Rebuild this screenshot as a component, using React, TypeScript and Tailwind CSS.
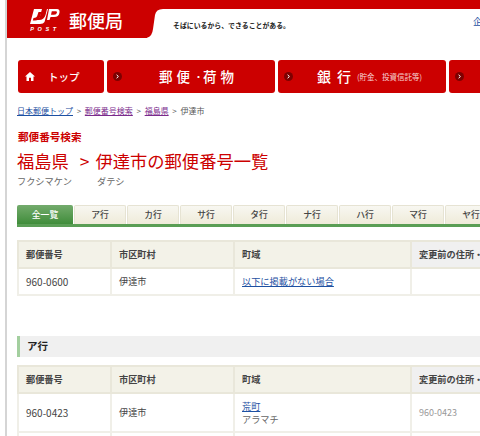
import React from 'react';

const FONT = "font-['Noto_Sans_CJK_JP','Noto_Sans',sans-serif]";

const tabs = ['ア行', 'カ行', 'サ行', 'タ行', 'ナ行', 'ハ行', 'マ行', 'ヤ行', 'ラ行'];

const Chevron = () => (
    <span className="w-[9px] h-[9px] rounded-full bg-[#7d0000] flex items-center justify-center shrink-0">
        <svg width="5" height="5" viewBox="0 0 5 5">
            <path d="M1.6 0.8 L3.4 2.5 L1.6 4.2" fill="none" stroke="#fff" strokeWidth="1" />
        </svg>
    </span>
);

const HomeIcon = () => (
    <svg width="10" height="9" viewBox="0 0 10 9" className="shrink-0">
        <path d="M5 0 L10 4.6 H8.5 V9 H6 V5.8 H4 V9 H1.5 V4.6 H0 Z" fill="#fff" />
    </svg>
);

const JpLogo = () => (
    <svg width="30" height="16" viewBox="0 0 30 16" className="block">
        <path d="M4 0 H12 L10 7 Q9 11 5 11 H9 Q14 11 15.5 6 L17 0 H18 L14.5 13 Q13.5 15 10 15 H0 Z" fill="#fff" />
        <path d="M3.5 9 Q7 9 7.5 6 L8.5 3 H11.5 L10 8 Q9 11.5 5 11.5 H2.8 Z" fill="#cc0000" />
        <path d="M19 0 H27 Q30 0 29.5 3.5 Q29 8 24 8 H20.5 L19.5 11 H17 Z M21.8 2.2 L21 5.8 H24 Q26.6 5.8 27 3.6 Q27.2 2.2 25.6 2.2 Z" fill="#fff" fillRule="evenodd" />
    </svg>
);

const PostalTable = ({ rows }: { rows: React.ReactNode }) => (
    <table className="table-fixed border-collapse w-[560px] text-[9.2px] text-[#444] ml-[17px]">
        <colgroup>
            <col className="w-[93px]" />
            <col className="w-[123px]" />
            <col className="w-[177px]" />
            <col className="w-[167px]" />
        </colgroup>
        <thead>
            <tr className="h-[27px]">
                <th className="border-2 border-[#e9e7da] bg-[#f3f2e8] text-left font-bold pl-[7px]">郵便番号</th>
                <th className="border-2 border-[#e9e7da] bg-[#f3f2e8] text-left font-bold pl-[7px]">市区町村</th>
                <th className="border-2 border-[#e9e7da] bg-[#f3f2e8] text-left font-bold pl-[7px]">町域</th>
                <th className="border-2 border-[#e9e7da] bg-[#f0f0f0] text-left font-bold pl-[7px]">変更前の住所・郵便番号</th>
            </tr>
        </thead>
        <tbody>{rows}</tbody>
    </table>
);

const cell = 'border-2 border-[#f0efe8] pl-[7px]';

export default function App() {
    return (
        <div className={`w-[480px] h-[436px] overflow-hidden bg-white flex ${FONT}`}>
            <div className="w-[7px] shrink-0 border-r-2 border-[#d5d5d5]" />
            <div className="w-[473px] shrink-0">
                {/* Header */}
                <div className="h-[9px] bg-[#cc0000]" />
                <div className="flex items-start h-[29px]">
                    <div className="w-[140px] h-[29px] bg-[#cc0000] flex items-start shrink-0">
                        <div className="ml-[23px] w-[30px] flex flex-col items-center">
                            <JpLogo />
                            <span className="text-[5.5px] leading-[5px] font-bold italic tracking-[3.6px] text-white font-['Liberation_Sans',sans-serif] mt-[2px] whitespace-nowrap">POST</span>
                        </div>
                        <span className="ml-[9px] text-[18px] leading-[23px] font-medium text-white whitespace-nowrap">郵便局</span>
                    </div>
                    <svg width="16" height="29" viewBox="0 0 16 29" className="shrink-0 block">
                        <path d="M0 0 H16 Q9 0 8 6 L6 20 Q5 29 -2 29 H0 Z" fill="#cc0000" />
                    </svg>
                    <span className="ml-[10px] mt-[11px] text-[6.9px] leading-[10px] font-bold text-[#222] whitespace-nowrap">そばにいるから、できることがある。</span>
                    <span className="ml-[183px] mt-[7px] text-[9px] leading-[12px] text-[#1d50a2] whitespace-nowrap">企業情報</span>
                </div>

                {/* Main nav */}
                <nav className="flex gap-[3px] mt-[22px] ml-[11px] h-[33px] text-white w-[520px]">
                    <div className="w-[86px] bg-[#cc0000] rounded-[3px] flex items-center pl-[7px] shrink-0">
                        <HomeIcon />
                        <span className="ml-[13px] text-[10.5px] font-medium whitespace-nowrap">トップ</span>
                    </div>
                    <div className="w-[168px] bg-[#cc0000] rounded-[3px] flex items-center pl-[6px] shrink-0">
                        <Chevron />
                        <span className="ml-[37px] text-[13.5px] font-medium tracking-[4px] whitespace-nowrap">郵便<span className="text-[9px] tracking-normal align-[2px]">・</span>荷物</span>
                    </div>
                    <div className="w-[168px] bg-[#cc0000] rounded-[3px] flex items-center pl-[6px] shrink-0">
                        <Chevron />
                        <span className="ml-[24px] text-[14px] font-medium tracking-[6px] whitespace-nowrap">銀行</span>
                        <span className="text-[7.5px] text-[#f7d5d5] whitespace-nowrap">(貯金、投資信託等)</span>
                    </div>
                    <div className="w-[168px] bg-[#cc0000] rounded-[3px] flex items-center pl-[6px] shrink-0">
                        <Chevron />
                    </div>
                </nav>

                {/* Breadcrumb */}
                <div className="ml-[10px] mt-[12px] text-[8px] leading-[12px] text-[#555] whitespace-nowrap flex">
                    <a className="text-[#1d50a2] underline">日本郵便トップ</a>
                    <span className="mx-[3.7px]">&gt;</span>
                    <a className="text-[#7a2a8c] underline">郵便番号検索</a>
                    <span className="mx-[3.7px]">&gt;</span>
                    <a className="text-[#7a2a8c] underline">福島県</a>
                    <span className="mx-[3.7px]">&gt;</span>
                    <span>伊達市</span>
                </div>

                {/* Title */}
                <div className="ml-[11px] mt-[13px] text-[10.6px] leading-[14px] font-bold text-[#cc0000] whitespace-nowrap">郵便番号検索</div>
                <h1 className="ml-[10px] mt-[5px] text-[17.3px] leading-[24px] text-[#cc0000] whitespace-nowrap">
                    福島県<span className="ml-[11px] mr-[6px]">&gt;</span>伊達市の郵便番号一覧
                </h1>
                <div className="ml-[10px] mt-[1px] flex text-[9.2px] leading-[14px] text-[#666]">
                    <span className="w-[80px]">フクシマケン</span>
                    <span>ダテシ</span>
                </div>

                {/* Kana tabs */}
                <div className="mt-[17px] ml-[10px] w-[560px] h-[22px] border-b-[3px] border-[#5a9e55] flex gap-[1px]">
                    <div className="w-[56px] h-[19px] rounded-t-[2px] bg-gradient-to-b from-[#73ab6c] to-[#3f8d3a] text-white text-[8.8px] font-medium flex items-center justify-center shrink-0">全一覧</div>
                    {tabs.map(t => (
                        <div key={t} className="w-[52px] h-[19px] rounded-t-[2px] border border-b-0 border-[#e6e3d3] bg-gradient-to-b from-[#f8f7f1] to-[#efebd9] text-[#444] text-[8.8px] font-medium flex items-center justify-center shrink-0">{t}</div>
                    ))}
                </div>

                <div className="mt-[13px] -ml-[7px]">
                    <PostalTable
                        rows={
                            <tr className="h-[27px]">
                                <td className={`${cell} text-[10px]`}>960-0600</td>
                                <td className={cell}>伊達市</td>
                                <td className={cell}><a className="text-[#1d50a2] underline">以下に掲載がない場合</a></td>
                                <td className={cell}></td>
                            </tr>
                        }
                    />
                </div>

                {/* Section heading */}
                <div className="mt-[40px] ml-[10px] w-[560px] h-[21px] bg-[#f0f0f0] border-l-[3px] border-[#a3cf9f] pl-[7px] text-[10.5px] leading-[20px] font-bold text-[#222]">ア行</div>

                <div className="mt-[8px] -ml-[7px]">
                    <PostalTable
                        rows={
                            <>
                                <tr className="h-[39px]">
                                    <td className={`${cell} text-[10px]`}>960-0423</td>
                                    <td className={cell}>伊達市</td>
                                    <td className={cell}>
                                        <a className="block leading-[13px] text-[#1d50a2] underline">荒町</a>
                                        <span className="block leading-[13px] text-[#666]">アラマチ</span>
                                    </td>
                                    <td className={`${cell} text-[#999] text-[9px]`}>960-0423</td>
                                </tr>
                                <tr className="h-[30px]">
                                    <td className={cell}></td>
                                    <td className={cell}></td>
                                    <td className={cell}></td>
                                    <td className={cell}></td>
                                </tr>
                            </>
                        }
                    />
                </div>
            </div>
        </div>
    );
}
